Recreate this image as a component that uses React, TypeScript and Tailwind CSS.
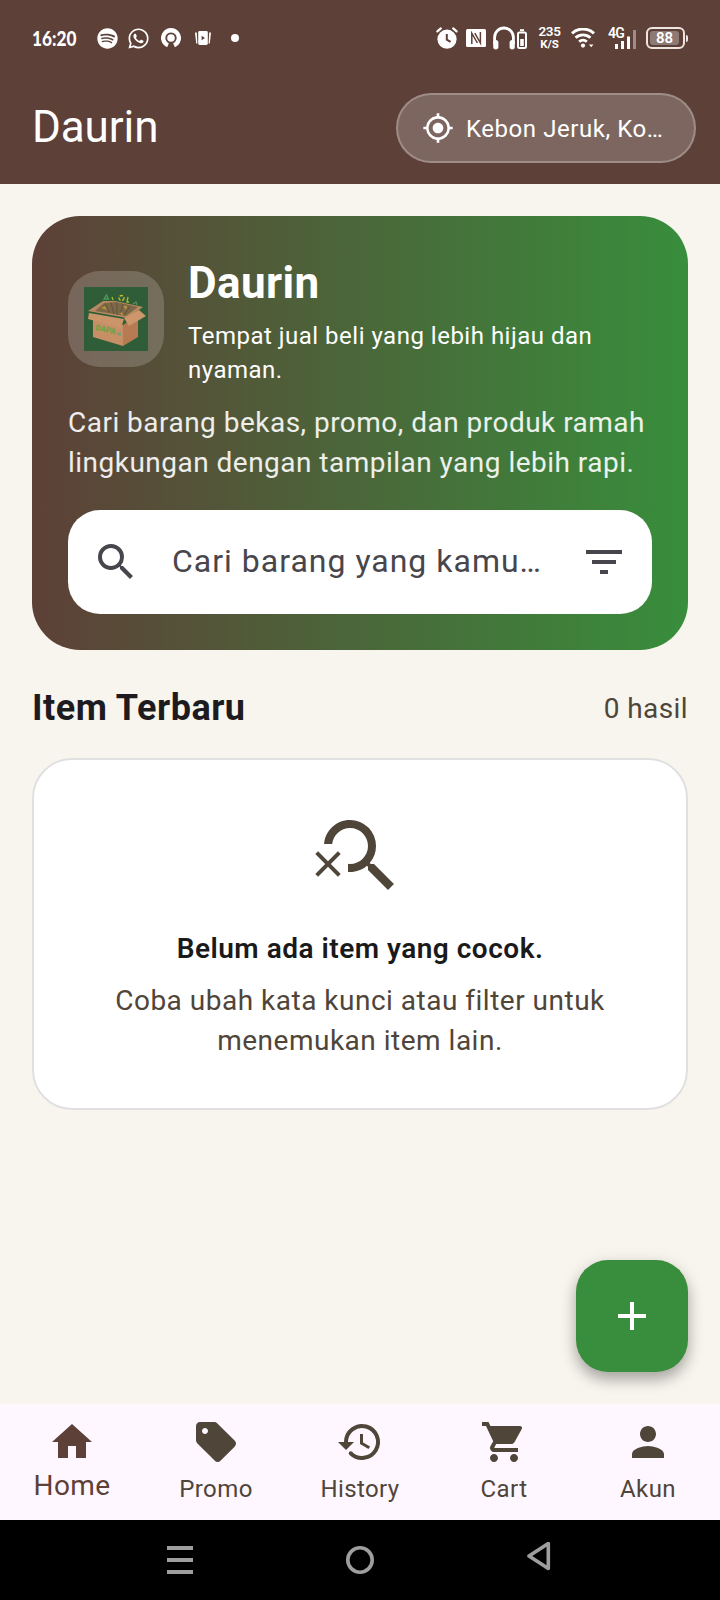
import type { ReactNode } from 'react';
import { FaSpotify, FaWhatsapp } from 'react-icons/fa';
import {
  MdAdd,
  MdFilterList,
  MdHome,
  MdMyLocation,
  MdPerson,
  MdSearch,
  MdSearchOff,
  MdSell,
  MdShoppingCart,
} from 'react-icons/md';

function HistoryIcon({ className }: { className?: string }) {
  return (
    <svg viewBox="0 0 24 24" className={className} fill="none" stroke="currentColor">
      <path d="M5 12.4V12a8 8 0 1 1 2.35 5.65" strokeWidth="2" />
      <circle cx="7.4" cy="17.6" r="1" fill="currentColor" stroke="none" />
      <path d="M1 12h8l-4 4z" fill="currentColor" stroke="none" />
      <path d="M12.75 8v4.6l3.9 2.3" strokeWidth="1.5" />
    </svg>
  );
}

const NAV_ITEMS = [
  { label: 'Home', icon: MdHome, active: true },
  { label: 'Promo', icon: MdSell, active: false },
  { label: 'History', icon: HistoryIcon, active: false },
  { label: 'Cart', icon: MdShoppingCart, active: false },
  { label: 'Akun', icon: MdPerson, active: false },
];

function StatusBar() {
  return (
    <div className="flex h-[72px] items-center px-8 pt-1 text-white">
      <span className="w-16 origin-left scale-x-[0.86] font-['Lato',sans-serif] text-[20px] leading-none font-black">
        16:20
      </span>
      <div className="flex items-center">
        <FaSpotify className="ml-px size-[21px]" />
        <FaWhatsapp className="ml-[9px] size-[23px]" />
        <svg viewBox="0 0 20 20" className="ml-[11px] size-5" fill="none">
          <path d="M7 17.2A7.8 7.8 0 1 1 13 17.2" stroke="currentColor" strokeWidth="4.4" />
          <circle cx="10" cy="10" r="3.8" fill="currentColor" />
        </svg>
        <svg viewBox="0 0 16 14" className="ml-[14px] h-[14px] w-4" fill="currentColor">
          <path d="M0 1.5h1.8l.6 11H1.2zM16 1.5h-1.8l-.6 11h1.2z" />
          <path
            d="M4.6 0h6.8a1.4 1.4 0 0 1 1.4 1.4v11.2a1.4 1.4 0 0 1-1.4 1.4H4.6a1.4 1.4 0 0 1-1.4-1.4V1.4A1.4 1.4 0 0 1 4.6 0zm2 4.8v4.4L10 7z"
            fillRule="evenodd"
          />
        </svg>
        <span className="ml-5 size-2 rounded-full bg-white" />
      </div>

      <div className="ml-auto flex items-center">
        <svg viewBox="0 0 22 22" className="size-[22px]" fill="none" stroke="currentColor">
          <circle cx="11" cy="12.2" r="9.6" fill="currentColor" stroke="none" />
          <path d="M1.4 4.4 4.8 1.4M20.6 4.4 17.2 1.4" strokeWidth="2.2" strokeLinecap="round" />
          <path d="M10.8 7v5.6l3.8 2.2" stroke="#5d4037" strokeWidth="2" />
        </svg>
        <svg viewBox="0 0 20 18" className="ml-2 h-[18px] w-5" fill="none">
          <rect width="20" height="18" rx="1.5" fill="currentColor" />
          <path d="M5.8 15V4.2L11.4 14M14.4 3v11L8.8 4.2" stroke="#5d4037" strokeWidth="1.5" />
        </svg>
        <svg viewBox="0 0 34 24" className="ml-[7px] h-6 w-[34px]" fill="none" stroke="currentColor">
          <path d="M1.6 18v-6.6a9.4 9.4 0 0 1 18.8 0V18" strokeWidth="2.8" />
          <path d="M2.8 16.5v4.3M19.2 16.5v4.3" strokeWidth="5.2" strokeLinecap="round" />
          <rect x="25" y="6.5" width="8" height="15.5" rx="1.5" strokeWidth="2" />
          <path d="M27 4.2h4" strokeWidth="2" />
          <rect x="27.2" y="13" width="3.6" height="7" fill="currentColor" stroke="none" />
        </svg>
        <div className="ml-[11px] flex w-[23px] flex-col items-center leading-none font-bold">
          <span className="-mt-0.5 text-[13.5px] leading-[14px] font-semibold tracking-[-0.3px]">235</span>
          <span className="text-[11.5px] leading-[12px]">K/S</span>
        </div>
        <svg viewBox="0 0 24 20" className="ml-[10px] h-5 w-6" fill="none" stroke="currentColor">
          <path
            d="M1 5.4a16 16 0 0 1 22 0M4.6 9.8a10.8 10.8 0 0 1 14.8 0M8.2 13.8a5.6 5.6 0 0 1 7.6 0"
            strokeWidth="2.9"
          />
          <circle cx="12" cy="17.6" r="2.1" fill="currentColor" stroke="none" />
          <path d="m18 16.4 2.2 2.8 2.2-2.8z" fill="currentColor" stroke="none" />
        </svg>
        <div className="relative ml-[13px] h-6 w-7">
          <span className="absolute top-0 left-0 text-[14px] leading-[14px] font-semibold tracking-[-0.8px]">4G</span>
          <svg viewBox="0 0 28 24" className="size-full" fill="none" stroke="currentColor" strokeWidth="3">
            <path d="M8.5 18v5M14.5 15v8M20.5 10.5V23" />
            <path d="M26.5 4v19" opacity=".4" />
          </svg>
        </div>
        <div className="ml-[10px] flex items-center">
          <div className="flex h-[22px] w-[39px] rounded-[6px] border-2 border-[#efe4e0] p-[2px]">
            <span className="flex w-[29px] items-center justify-center rounded-[3px] bg-[#8d7a74] text-[15px] leading-none font-semibold">
              88
            </span>
          </div>
          <span className="ml-px h-[7px] w-[2px] rounded-r bg-[#efe4e0]" />
        </div>
      </div>
    </div>
  );
}

function AppBar() {
  return (
    <header className="bg-[#5d4037]">
      <StatusBar />
      <div className="flex h-28 items-center justify-between pr-6 pl-8 text-white">
        <h1 className="-mt-0.5 text-[44px] leading-[56px] tracking-[-0.1px]">Daurin</h1>
        <button
          type="button"
          className="flex h-[70px] w-[300px] items-center gap-3 rounded-full border-2 border-white/25 bg-white/20 px-6"
        >
          <MdMyLocation className="size-8 shrink-0" />
          <span className="pt-0.5 text-[24px] leading-8 tracking-[0.55px] whitespace-nowrap">Kebon Jeruk, Ko…</span>
        </button>
      </div>
    </header>
  );
}

function BoxLogo() {
  return (
    <svg viewBox="0 0 64 64" className="size-16">
      <rect width="64" height="64" fill="#2f5d38" />
      <g fill="none" strokeWidth="1.3">
        <path d="m20 12 2.5-4 2 4z" stroke="#4f9a55" />
        <circle cx="37.5" cy="11" r="2.5" stroke="#c9b92f" strokeDasharray="3.4 1.4" />
        <path d="m44 10-1 5h2M28 10l1 3" stroke="#a8b83a" />
        <path d="m49 17 3-2 1 3" stroke="#5b8d5c" />
      </g>
      <path d="m4 24 15-10 12 0 28 6-16 11z" fill="#b98a61" />
      <path d="m11 24 9-8 12-1 22 5-12 9z" fill="#7d6947" />
      <path d="m21 17 5 9M27 16l3 11M33 16v12M39 17l-3 11M46 19l-6 9" stroke="#665642" strokeWidth="1.2" />
      <path d="m17 21 4-2 2 4zM39 19l4 0-1 4zM35 27l3-2 1 3z" fill="#b89438" />
      <path d="m9 30 30 8v21L9 50z" fill="#c68f65" />
      <path d="m39 38 15-10v22l-15 9z" fill="#b67b53" />
      <path d="m5 26 35 6-3 9-33-9z" fill="#cb956a" />
      <path d="m40 31 15-8 7 6-17 10z" fill="#cd966b" />
      <text
        x="11"
        y="43"
        transform="rotate(12 11 43)"
        fill="#6fa344"
        className="font-['Roboto',sans-serif] text-[8px] font-black"
      >
        DAPA
      </text>
      <path d="m33 45 4 1v3l-4-1z" fill="#7f9d72" />
    </svg>
  );
}

function HeroCard() {
  return (
    <section className="rounded-[48px] bg-linear-to-r/srgb from-[#5d4037] to-[#388e3c] p-9 text-white">
      <div className="flex items-center gap-6">
        <div className="-mt-0.5 flex size-24 shrink-0 items-center justify-center rounded-[32px] bg-white/18">
          <BoxLogo />
        </div>
        <div>
          <h2 className="text-[44px] leading-[62px] font-bold tracking-[0.4px]">Daurin</h2>
          <p className="mt-1 pt-px text-[24px] leading-[34px] tracking-[0.5px]">
            Tempat jual beli yang lebih hijau dan
            <br />
            nyaman.
          </p>
        </div>
      </div>
      <p className="mt-4 text-[28px] leading-10 tracking-[0.48px] whitespace-nowrap text-white/90">
        Cari barang bekas, promo, dan produk ramah
        <br />
        lingkungan dengan tampilan yang lebih rapi.
      </p>
      <div className="mt-[27px] flex h-[104px] items-center rounded-[32px] bg-white px-6 text-[#48464c]">
        <MdSearch className="size-12 shrink-0" />
        <span className="-mt-0.5 ml-8 flex-1 text-[32px] leading-[48px] tracking-[1px] whitespace-nowrap">
          Cari barang yang kamu…
        </span>
        <MdFilterList className="size-12 shrink-0" />
      </div>
    </section>
  );
}

function EmptyState() {
  return (
    <section className="mt-[26px] flex flex-col items-center rounded-[40px] border-2 border-[#e0e0e0] bg-white py-12 text-center text-[#4f4539]">
      <MdSearchOff className="size-24" />
      <h3 className="mt-[25px] text-[28px] leading-10 font-semibold tracking-[0.5px] text-[#1a1a1a]">
        Belum ada item yang cocok.
      </h3>
      <p className="mt-3 -mb-px text-[28px] leading-10 tracking-[0.5px]">
        Coba ubah kata kunci atau filter untuk
        <br />
        menemukan item lain.
      </p>
    </section>
  );
}

function BottomNav() {
  return (
    <nav className="grid h-[116px] grid-cols-5 bg-[#fef7ff] pt-[14px]">
      {NAV_ITEMS.map(({ label, icon: Icon, active }) => (
        <button
          key={label}
          type="button"
          className={`flex flex-col items-center ${active ? 'text-[#5d4037]' : 'text-[#4f4539]'}`}
        >
          <Icon className="size-12" />
          <span
            className={
              active ? 'text-[28px] leading-[40px] tracking-[0.4px]' : 'mt-[5px] text-[24px] leading-9 tracking-[0.4px]'
            }
          >
            {label}
          </span>
        </button>
      ))}
    </nav>
  );
}

function SystemButton({ children }: { children: ReactNode }) {
  return (
    <svg viewBox="0 0 32 36" className="h-9 w-8" fill="none" stroke="#9e9e9e" strokeWidth="4">
      {children}
    </svg>
  );
}

function SystemBar() {
  return (
    <div className="flex h-20 items-center justify-between bg-black px-[164px]">
      <SystemButton>
        <path d="M3 6h26M3 18h26M3 30h26" />
      </SystemButton>
      <SystemButton>
        <circle cx="16" cy="18" r="12.2" strokeWidth="3.6" />
      </SystemButton>
      <SystemButton>
        <path d="M5 14 24.3 1.5v25z" strokeWidth="3.6" strokeLinejoin="round" />
      </SystemButton>
    </div>
  );
}

export default function App() {
  return (
    <div className="flex h-[1600px] w-[720px] flex-col overflow-hidden bg-[#f8f5ee] font-['Roboto',sans-serif]">
      <AppBar />
      <main className="relative flex-1 px-8 pt-8">
        <HeroCard />
        <div className="mt-[34px] flex h-12 items-center justify-between">
          <h2 className="text-[36px] leading-[48px] font-bold tracking-[0.5px] text-[#1d1b20]">Item Terbaru</h2>
          <span className="pt-px text-[28px] leading-10 tracking-[0.4px] text-[#4f4539]">0 hasil</span>
        </div>
        <EmptyState />
        <button
          type="button"
          className="absolute right-8 bottom-8 flex size-28 items-center justify-center rounded-[32px] bg-[#388e3c] text-white shadow-[0_8px_14px_rgba(0,0,0,0.26),0_4px_20px_rgba(0,0,0,0.1)]"
        >
          <MdAdd className="size-12" />
        </button>
      </main>
      <BottomNav />
      <SystemBar />
    </div>
  );
}
